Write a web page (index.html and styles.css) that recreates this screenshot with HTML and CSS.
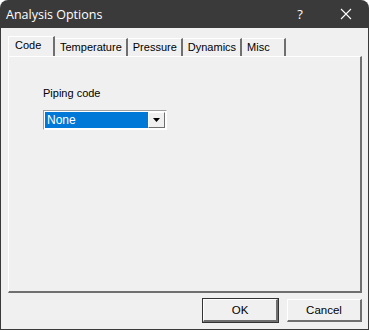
FILE: index.html
```html
<!DOCTYPE html>
<html lang="en">
<head>
  <meta charset="UTF-8" />
  <title>Analysis Options</title>
  <link rel="stylesheet" href="styles.css">
</head>
<body>
  <div class="window">
    <!-- Title bar -->
    <div class="titlebar">
      <span class="title">Analysis Options</span>
      <span class="help">?</span>
      <span class="close">
        <svg width="12" height="12" viewBox="0 0 12 12"><path d="M1 1L11 11M11 1L1 11" stroke="#fff" stroke-width="1.1"/></svg>
      </span>
    </div>

    <div class="body">
      <!-- Tabs -->
      <div class="tabs">
        <div class="tab active">Code</div>
        <div class="tab">Temperature</div>
        <div class="tab">Pressure</div>
        <div class="tab">Dynamics</div>
        <div class="tab">Misc</div>
      </div>

      <div class="panel">
        <div class="label">Piping code</div>
        <div class="combo">
          <div class="combo-value">None</div>
          <div class="combo-btn">
            <svg width="7" height="4" viewBox="0 0 7 4"><path d="M0 0H7L3.5 4Z" fill="#000"/></svg>
          </div>
        </div>
      </div>

      <!-- Buttons -->
      <div class="buttons">
        <button class="btn default">OK</button>
        <button class="btn">Cancel</button>
      </div>
    </div>
  </div>
</body>
</html>
```

FILE: styles.css
```css
* {
  margin: 0;
  padding: 0;
  box-sizing: border-box;
}
body {
  background: #fff;
  font-family: "Liberation Sans", Arial, sans-serif;
  font-size: 11px;
  color: #000;
}
.window {
  width: 369px;
  height: 330px;
  background: #3a3a3a;
  border-radius: 8px 8px 0 0;
  display: flex;
  flex-direction: column;
  overflow: hidden;
}
/* Title bar */
.titlebar {
  height: 28px;
  display: flex;
  align-items: center;
  padding-left: 6px;
  color: #fff;
  font-family: "Open Sans", "Noto Sans", sans-serif;
  font-size: 12.5px;
}
.title {
  flex: 1;
}
.help {
  width: 46px;
  text-align: center;
  font-size: 13px;
}
.close {
  width: 46px;
  display: flex;
  justify-content: center;
}
/* Dialog body */
.body {
  flex: 1;
  background: #f0f0f0;
  margin: 0 1px 1px 1px;
  padding: 8px 6px 0 7px;
  display: flex;
  flex-direction: column;
}
.tabs {
  display: flex;
  height: 20px;
  align-items: flex-end;
}
.tab {
  height: 18px;
  min-width: 44px;
  padding: 2px 4px 0 5px;
  border-right: 2px solid #6f6f6f;
  border-top: 1px solid #fff;
  white-space: nowrap;
}
.tab.active {
  height: 20px;
  width: 47px;
  padding: 2px 0 0 6px;
  border-left: 1px solid #fff;
}
.panel {
  height: 237px;
  border-top: 1px solid #fff;
  border-left: 1px solid #fff;
  border-right: 2px solid #6f6f6f;
  border-bottom: 2px solid #6f6f6f;
  padding: 30px 0 0 34px;
}
.label {
  margin-bottom: 11px;
}
.combo {
  width: 124px;
  height: 20px;
  display: flex;
  border-top: 1px solid #a0a0a0;
  border-left: 1px solid #a0a0a0;
  border-right: 1px solid #fff;
  border-bottom: 1px solid #fff;
  background: #fff;
  padding: 1px;
}
.combo-value {
  flex: 1;
  background: #0078d7;
  color: #fff;
  padding-left: 2px;
  line-height: 16px;
  font-size: 12px;
}
.combo-btn {
  width: 17px;
  background: #f0f0f0;
  border-right: 1px solid #6f6f6f;
  border-bottom: 1px solid #6f6f6f;
  border-top: 1px solid #fff;
  border-left: 1px solid #fff;
  display: flex;
  align-items: center;
  justify-content: center;
}
.buttons {
  display: flex;
  justify-content: flex-end;
  gap: 9px;
  padding-top: 6px;
}
.btn {
  width: 75px;
  height: 23px;
  background: #f0f0f0;
  font-family: "Liberation Sans", Arial, sans-serif;
  font-size: 11.5px;
  border-top: 1px solid #fff;
  border-left: 1px solid #fff;
  border-right: 2px solid #6f6f6f;
  border-bottom: 2px solid #6f6f6f;
}
.btn.default {
  outline: 1px solid #333;
}
```
